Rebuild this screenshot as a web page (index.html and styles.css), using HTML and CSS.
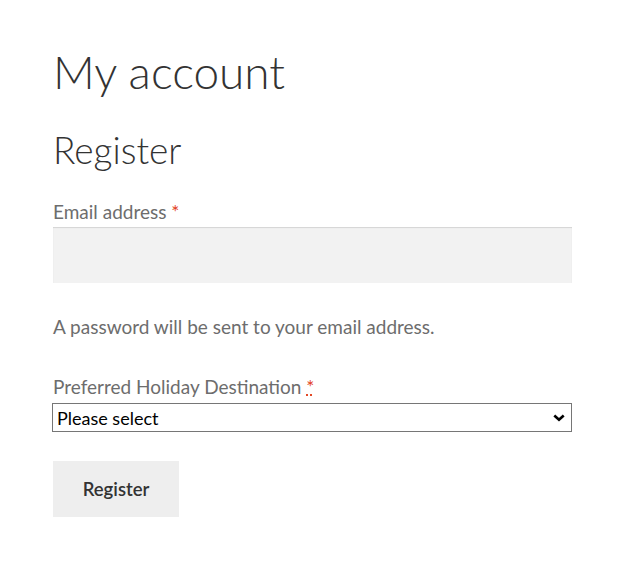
FILE: index.html
```html
<!DOCTYPE html>
<html lang="en">
<head>
  <meta charset="UTF-8">
  <title>My account</title>
  <link rel="stylesheet" href="styles.css">
</head>
<body>
  <div class="page">
    <h1 class="page-title">My account</h1>
    <h2 class="section-title">Register</h2>
    <form class="register">
      <div class="form-row">
        <label for="reg_email">Email address <span class="required">*</span></label>
        <input type="email" id="reg_email" class="input-text">
      </div>
      <p class="note">A password will be sent to your email address.</p>
      <div class="form-row">
        <label for="destination" class="label-select">Preferred Holiday Destination <abbr class="required" title="required">*</abbr></label>
        <select id="destination" class="select">
          <option>Please select</option>
        </select>
      </div>
      <button type="button" class="button">Register</button>
    </form>
  </div>
</body>
</html>
```

FILE: styles.css
```css
body {
  margin: 0;
  font-family: Lato, "Liberation Sans", sans-serif;
  font-size: 19px;
  color: #6d6d6d;
  background: #fff;
}
.page {
  width: 519px;
  margin-left: 53px;
  padding-top: 44px;
}
.page-title {
  margin: 0;
  font-size: 46px;
  font-weight: 300;
  line-height: 55px;
  color: #333;
}
.section-title {
  margin: 29px 0 0;
  font-size: 37px;
  font-weight: 300;
  line-height: 44px;
  color: #333;
}
.register {
  margin-top: 28px;
}
.form-row label {
  display: block;
  line-height: 24px;
  margin-bottom: 3px;
}
.form-row .label-select {
  margin-bottom: 4px;
}
.required {
  color: #e2401c;
}
abbr.required {
  text-decoration: underline dotted;
}
.input-text {
  display: block;
  box-sizing: border-box;
  width: 100%;
  height: 56px;
  border: 0;
  background: #f2f2f2;
  box-shadow: inset 0 1px 1px rgba(0, 0, 0, 0.125);
}
.note {
  margin: 32px 0 36px;
  line-height: 24px;
}
.select {
  display: block;
  box-sizing: border-box;
  width: 520px;
  height: 29px;
  margin-left: -1px;
  padding: 0 24px 0 4px;
  font-family: inherit;
  font-size: 18px;
  color: #000;
  border: 1px solid #767676;
  border-radius: 0;
  -webkit-appearance: none;
  appearance: none;
  background: #fff url("data:image/svg+xml,%3Csvg xmlns='http://www.w3.org/2000/svg' width='12' height='8' viewBox='0 0 12 8'%3E%3Cpath d='M1.3 1.5 6 5.8 10.7 1.5' fill='none' stroke='%23000' stroke-width='2.6'/%3E%3C/svg%3E") no-repeat right 6px center;
}
.button {
  margin-top: 29px;
  width: 126px;
  height: 56px;
  border: 0;
  background: #eee;
  color: #333;
  font-family: inherit;
  font-size: 18.5px;
  font-weight: 600;
}
```
